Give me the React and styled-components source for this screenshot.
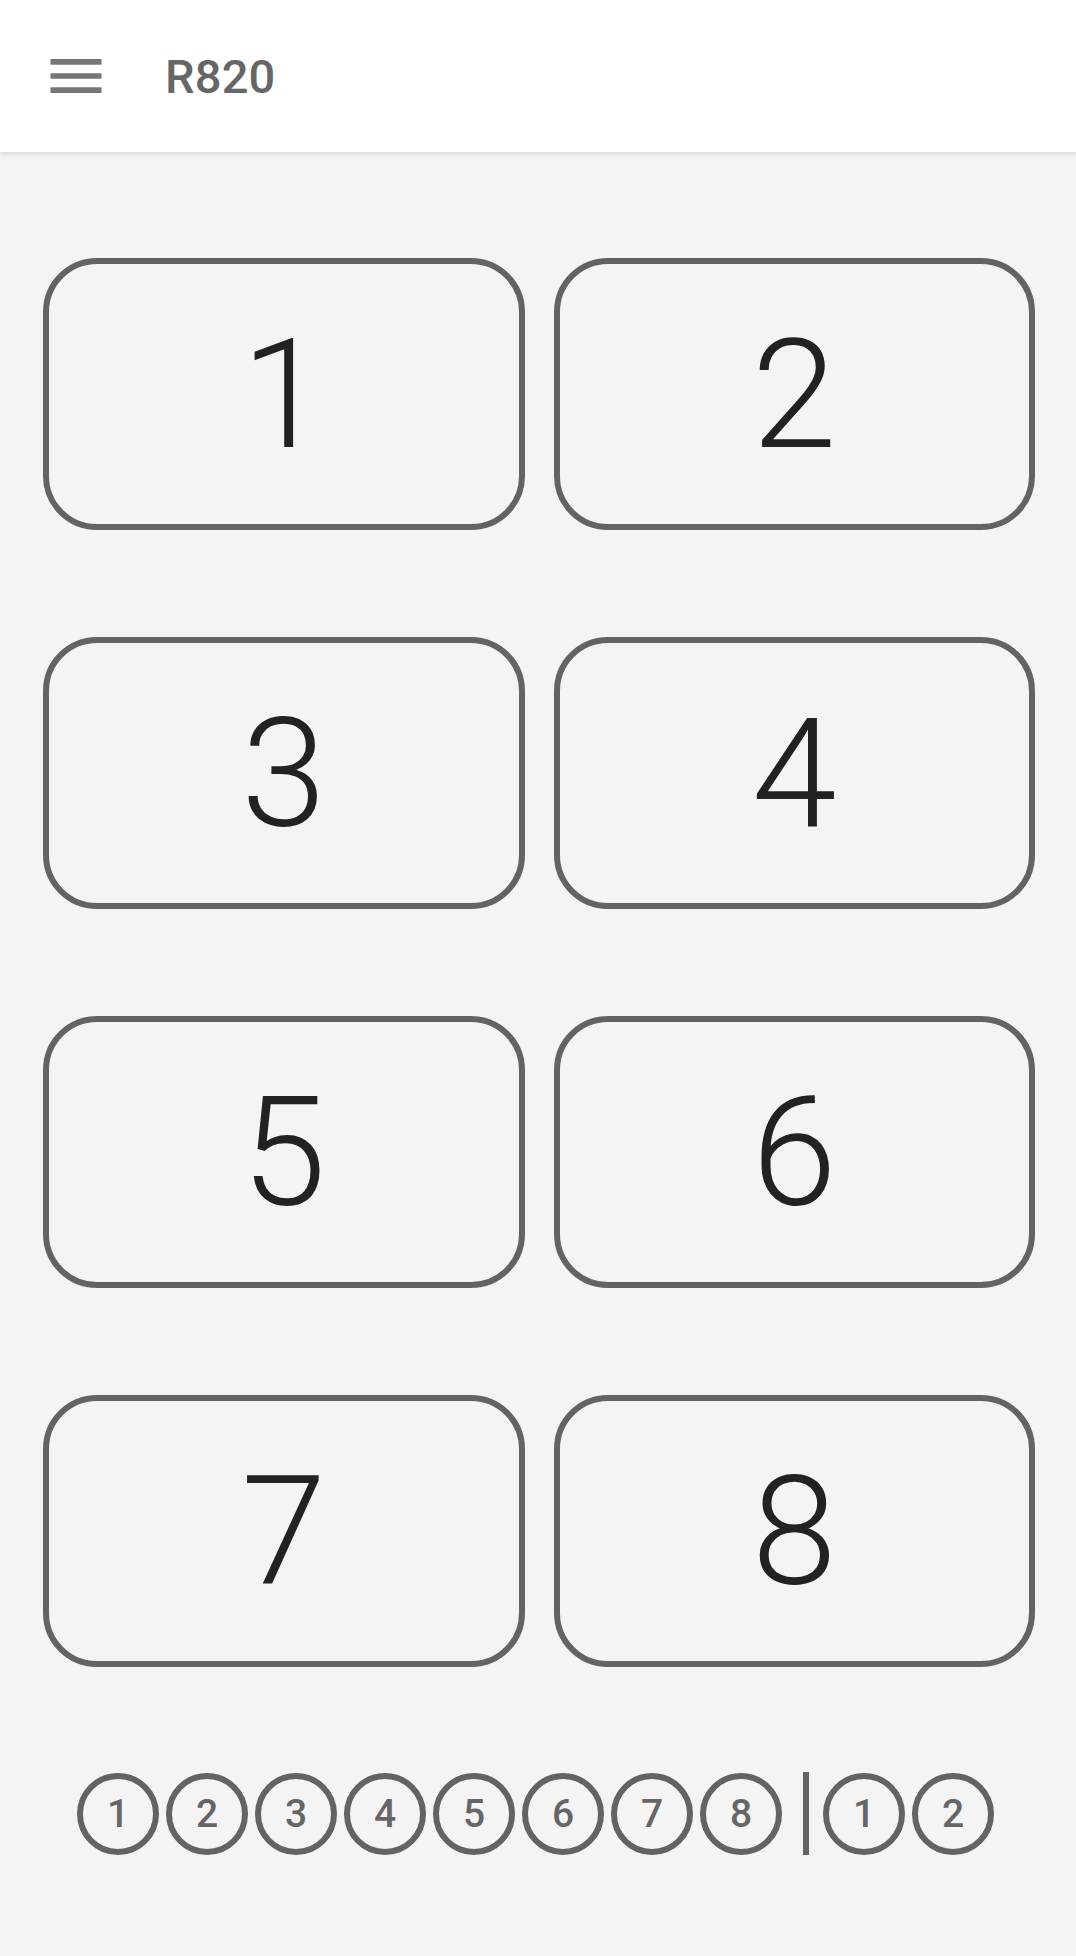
import React from 'react'
import styled, { createGlobalStyle } from 'styled-components'

const GlobalStyles = createGlobalStyle`
  html, body {
    margin: 0;
    padding: 0;
    background: #f4f4f4;
  }
  body {
    font-family: Roboto, 'Noto Sans', sans-serif;
  }
`

const Page = styled.div`
  width: 1076px;
  min-height: 1956px;
  background: #f4f4f4;
  display: flex;
  flex-direction: column;
`

const TopBar = styled.header`
  height: 152px;
  background: #fff;
  display: flex;
  align-items: center;
  padding-left: 42px;
  box-shadow: 0 2px 5px rgba(0, 0, 0, 0.12);
  position: relative;
  z-index: 1;
`

const MenuButton = styled.button`
  width: 68px;
  height: 68px;
  padding: 0;
  border: 0;
  background: none;
  display: flex;
  color: #767676;
`

const Title = styled.h1`
  margin: 0 0 0 55px;
  font-family: Roboto, sans-serif;
  font-weight: 500;
  font-size: 47px;
  color: #666;
  letter-spacing: 0.2px;
`

const PadGrid = styled.main`
  display: grid;
  grid-template-columns: 1fr 1fr;
  column-gap: 29px;
  row-gap: 107px;
  padding: 106px 41px 0 43px;
`

const PadButton = styled.button`
  height: 272px;
  box-sizing: border-box;
  border: 6px solid #636363;
  border-radius: 54px;
  background: #f4f4f4;
  display: flex;
  align-items: center;
  justify-content: center;
  font-family: Roboto, sans-serif;
  font-weight: 300;
  font-size: 153px;
  line-height: 1;
  color: #222;
  padding: 0;
`

const ChipRow = styled.nav`
  display: flex;
  align-items: center;
  justify-content: center;
  gap: 7px;
  margin-top: 105px;
  padding-right: 5px;
`

const Chip = styled.span`
  width: 82px;
  height: 82px;
  box-sizing: border-box;
  border: 6px solid #636363;
  border-radius: 50%;
  display: flex;
  align-items: center;
  justify-content: center;
  font-family: Roboto, sans-serif;
  font-weight: 500;
  font-size: 39px;
  color: #666;
`

const Divider = styled.span`
  width: 6px;
  height: 83px;
  background: #636363;
  margin: 0 7px 0 14px;
`

const MenuIcon = () => (
  <svg width="68" height="68" viewBox="0 0 24 24" fill="currentColor">
    <path d="M3 18h18v-2H3v2zm0-5h18v-2H3v2zm0-7v2h18V6H3z" />
  </svg>
)

const pads = [1, 2, 3, 4, 5, 6, 7, 8]
const extras = [1, 2]

const App = () => {
  return (
    <Page>
      <GlobalStyles />
      <TopBar>
        <MenuButton aria-label="menu">
          <MenuIcon />
        </MenuButton>
        <Title>R820</Title>
      </TopBar>
      <PadGrid>
        {pads.map(n => (
          <PadButton key={n}>{n}</PadButton>
        ))}
      </PadGrid>
      <ChipRow>
        {pads.map(n => (
          <Chip key={n}>{n}</Chip>
        ))}
        <Divider />
        {extras.map(n => (
          <Chip key={'e' + n}>{n}</Chip>
        ))}
      </ChipRow>
    </Page>
  )
}

export default App
